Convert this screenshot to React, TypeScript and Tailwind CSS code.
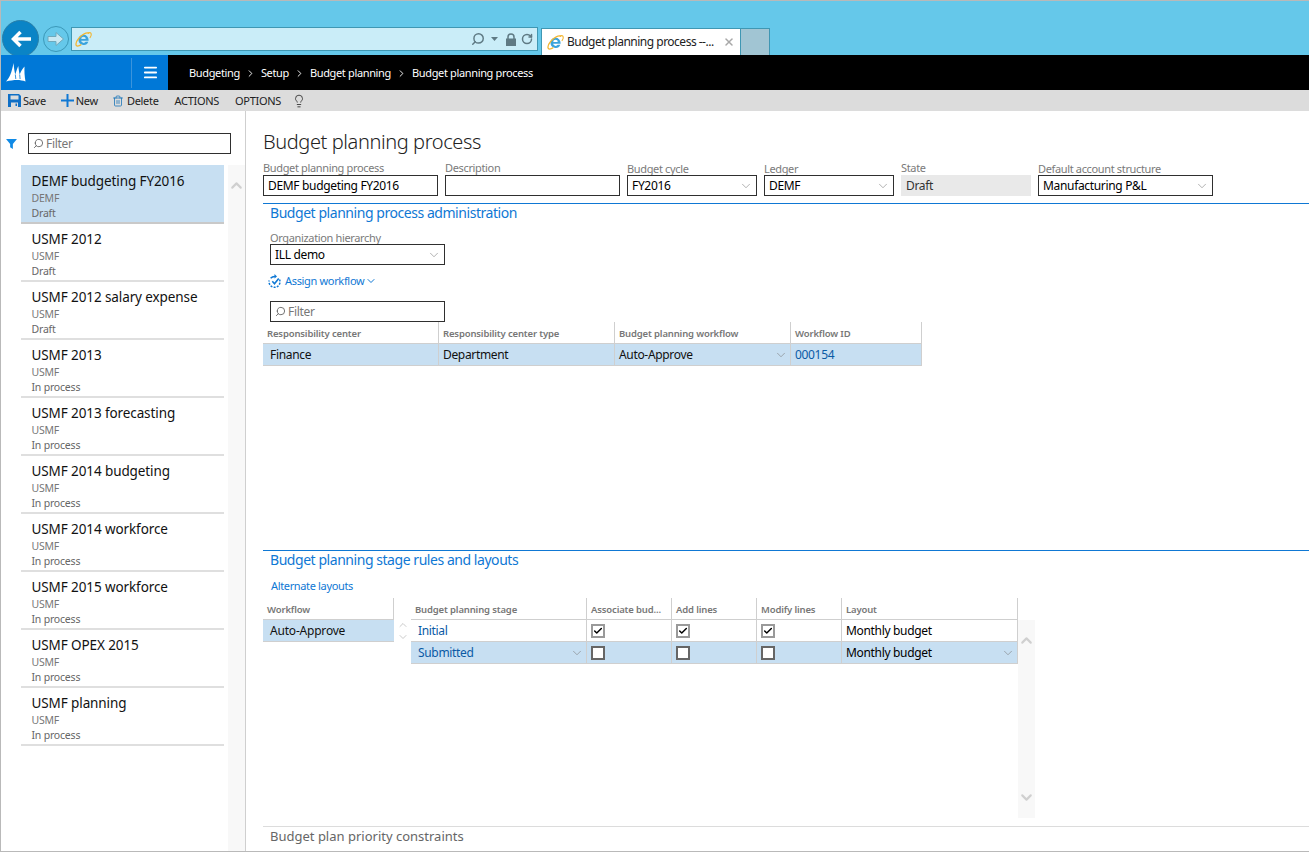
import { ChevronDown, ChevronUp, Lightbulb, Search, RotateCw, X, Trash2, Menu, ChevronRight, Check } from "lucide-react";

const processes = [
  { name: "DEMF budgeting FY2016", ledger: "DEMF", state: "Draft", selected: true },
  { name: "USMF 2012", ledger: "USMF", state: "Draft" },
  { name: "USMF 2012 salary expense", ledger: "USMF", state: "Draft" },
  { name: "USMF 2013", ledger: "USMF", state: "In process" },
  { name: "USMF 2013 forecasting", ledger: "USMF", state: "In process" },
  { name: "USMF 2014 budgeting", ledger: "USMF", state: "In process" },
  { name: "USMF 2014 workforce", ledger: "USMF", state: "In process" },
  { name: "USMF 2015 workforce", ledger: "USMF", state: "In process" },
  { name: "USMF OPEX 2015", ledger: "USMF", state: "In process" },
  { name: "USMF planning", ledger: "USMF", state: "In process" },
];

const IeLogo = ({ size }: { size: number }) => (
  <svg width={size} height={size} viewBox="0 0 20 20" className="shrink-0">
    <path d="M10 4.500a6 6 0 0 1 6 6v1H7.200a3 3 0 0 0 5.400 1.200h3.100A6 6 0 1 1 10 4.500Zm-2.700 5h5.400a2.700 2.700 0 0 0-5.400 0Z" fill="#3ba3dc" />
    <path d="M16.500 3C14 1 8 4 4.500 8.500 2 11.500 0.500 15 1.500 17c1 1.500 4 0.500 6-1" fill="none" stroke="#f2b632" strokeWidth="1.500" />
    <path d="M15 2.400c2.500-1 4.500-0.500 4 2.500-.2 1-.7 2-1.500 3.200" fill="none" stroke="#f2b632" strokeWidth="1.300" />
  </svg>
);

const Logo = () => (
  <svg width="20" height="19" viewBox="0 0 20 19">
    <path d="M0 18.500C3 16 6 9 7.500 0c.5 5 1 9 1.800 11.500C10.300 8 11.300 5 12.300 3c.5 4 .8 6.500 1.400 8.500C15 8 17 5 18.500 3.500c-.2 4.500 0 9.500 1 15-5-2-11.500-2-19.500 0Z" fill="#fff" />
    <path d="M9.300 11.500 9.800 16M13.700 11.500l.4 4.500" stroke="#0078d7" strokeWidth="0.800" fill="none" />
  </svg>
);

const AssignIcon = () => (
  <svg width="14" height="15" viewBox="0 0 14 15" fill="none" stroke="#0f78d4">
    <path d="M2.600 4.200A5.500 5.500 0 0 1 7 2.400" strokeWidth="1.500" />
    <path d="M6.500 0 9 2.400 6.500 4.600Z" fill="#0f78d4" stroke="none" />
    <path d="M11.500 5.500a5.500 5.500 0 1 1-10.300 1" strokeWidth="1.500" strokeDasharray="2 1.300" />
    <path d="M4.300 7.300 6.500 9.700 10.700 4.500" strokeWidth="1.600" />
  </svg>
);

const Caret = () => <ChevronDown size={14} strokeWidth={1} className="text-[#7a7a7a] shrink-0" />;

const Field = ({ label, value, width, select, readOnly, lift }: { label: string; value?: string; width: string; select?: boolean; readOnly?: boolean; lift?: boolean }) => (
  <div className={`flex flex-col ${width}`}>
    <span className={`text-[11px] leading-[13px] tracking-[-0.35px] text-[#7a7a7a] ${lift ? "-translate-y-px" : ""}`}>{label}</span>
    <div
      className={
        readOnly
          ? "h-[21px] flex items-center pl-[5px] bg-[#e9e9e9] text-[12px] tracking-[-0.33px] text-[#333]"
          : "h-[21px] flex items-center justify-between pl-[4px] pr-[3px] border border-[#2f2f2f] text-[12px] tracking-[-0.33px] text-black"
      }
    >
      <span>{value}</span>
      {select && <Caret />}
    </div>
  </div>
);

const FilterBox = ({ width }: { width: string }) => (
  <div className={`h-[21px] border border-[#2f2f2f] flex items-center gap-[2px] pl-[4px] ${width}`}>
    <Search size={11} strokeWidth={2} className="text-[#666] -scale-x-100" />
    <span className="text-[12px] tracking-[-0.3px] text-[#777]">Filter</span>
  </div>
);

const HeaderCell = ({ children, width }: { children: string; width: string }) => (
  <div className={`${width} h-[21px] flex items-center pl-[4px] pt-[3px] border-r border-[#cfcfcf] text-[9.500px] tracking-[-0.15px] font-semibold text-[#777]`}>{children}</div>
);

const CheckBox = ({ on }: { on?: boolean }) =>
  on ? (
    <div className="w-[14px] h-[14px] border-2 border-[#9a9a9a] bg-white flex items-center justify-center">
      <Check size={12} strokeWidth={3.500} className="text-black" />
    </div>
  ) : (
    <div className="w-[14px] h-[14px] border-2 border-[#666] bg-white" />
  );

const SectionHead = ({ children }: { children: string }) => (
  <div className="border-t border-[#0f78d4] pl-[7px] h-[20px] text-[14px] leading-[18px] tracking-[-0.45px] text-[#0f78d4]">{children}</div>
);

const StageRow = ({ stage, selected, checked }: { stage: string; selected?: boolean; checked?: boolean }) => (
  <div className={`flex h-[22px] border-b border-[#cfcfcf] text-[12px] tracking-[-0.33px] ${selected ? "bg-[#c7dff2]" : ""}`}>
    <div className="w-[176px] flex items-center justify-between pl-[7px] pr-[2px] border-r border-[#cfcfcf] text-[#0a5aa5]">
      <span>{stage}</span>
      {selected && <Caret />}
    </div>
    <div className="w-[85px] flex items-center pl-[4px] border-r border-[#cfcfcf]"><CheckBox on={checked} /></div>
    <div className="w-[85px] flex items-center pl-[4px] border-r border-[#cfcfcf]"><CheckBox on={checked} /></div>
    <div className="w-[85px] flex items-center pl-[4px] border-r border-[#cfcfcf]"><CheckBox on={checked} /></div>
    <div className="w-[176px] flex items-center justify-between pl-[4px] pr-[2px] border-r border-[#cfcfcf] text-black">
      <span>Monthly budget</span>
      {selected && <Caret />}
    </div>
  </div>
);

export default function App() {
  return (
    <div className="w-[1309px] h-[852px] overflow-hidden flex flex-col bg-white font-['Noto_Sans','Open_Sans',sans-serif] border-l border-t border-b border-[#b9b9b9]">
      {/* browser chrome */}
      <div className="h-[54px] shrink-0 bg-[#65c8ea] flex items-end pl-[1px]">
        <div className="w-[37px] h-[35px] overflow-hidden">
          <div className="w-[37px] h-[37px] rounded-full bg-[#0a84c6] border border-[#2a7fa8] flex items-center justify-center">
            <svg width="21" height="18" viewBox="0 0 21 18" fill="none" stroke="#fff" strokeWidth="3.500"><path d="M21 9H3M10.500 2 3.500 9l7 7" /></svg>
          </div>
        </div>
        <div className="ml-[4px] mb-[3px] w-[26px] h-[26px] rounded-full border border-[#3b98b8] flex items-center justify-center">
          <svg width="18" height="16" viewBox="0 0 18 16"><path d="M1 5.500h8V1.500L16.500 8 9 14.500v-4H1Z" fill="#c9e9f3" stroke="#6fa9bc" /></svg>
        </div>
        <div className="ml-[2px] mb-[4px] w-[467px] h-[24px] bg-[#caedf8] border border-[#3f97b3] flex items-center pl-[3px] pr-[4px]">
          <IeLogo size={17} />
          <div className="ml-auto flex items-center text-[#5f7a84]">
            <Search size={14} strokeWidth={2.500} className="-scale-x-100" />
            <svg width="9" height="5" viewBox="0 0 9 5" className="ml-[5px] mr-[6px]"><path d="M1 0h7L4.500 4Z" fill="#5f7a84" /></svg>
            <svg width="12" height="13" viewBox="0 0 12 13" fill="#5f7a84"><path d="M1 5.500h10V13H1Z" /><path d="M3 6V4a3 3 0 0 1 6 0v2" fill="none" stroke="#5f7a84" strokeWidth="1.500" /></svg>
            <RotateCw size={12} strokeWidth={3} className="ml-[4px]" />
          </div>
        </div>
        <div className="ml-[3px] w-[200px] h-[27px] bg-white border border-[#3f97b3] border-b-0 flex items-center pl-[5px] gap-[3px] pr-[5px]">
          <IeLogo size={17} />
          <span className="text-[12px] tracking-[-0.5px] text-[#222] whitespace-nowrap">Budget planning process --...</span>
          <X size={12} strokeWidth={3} className="text-[#a8a8a8] ml-auto" />
        </div>
        <div className="w-[29px] h-[27px] bg-[#a1c5d3] border border-[#3f97b3] border-b-0 border-l-0" />
      </div>

      {/* nav bar */}
      <div className="h-[35px] shrink-0 bg-black flex items-center">
        <div className="w-[167px] h-full bg-[#0078d7] flex items-center">
          <div className="w-[131px] h-[30px] border-r border-[#3b94dc] pl-[5px] flex items-center"><Logo /></div>
          <div className="flex-1 flex justify-center"><Menu size={17} strokeWidth={2.500} className="text-white" /></div>
        </div>
        <div className="ml-[21px] pt-[2px] flex items-center text-[11px] tracking-[-0.35px] text-white">
          <span>Budgeting</span>
          <ChevronRight size={11} className="mx-[5px]" />
          <span>Setup</span>
          <ChevronRight size={11} className="mx-[5px]" />
          <span>Budget planning</span>
          <ChevronRight size={11} className="mx-[5px]" />
          <span>Budget planning process</span>
        </div>
      </div>

      {/* action pane */}
      <div className="h-[21px] shrink-0 bg-[#dcdcdc] flex items-center pl-[7px] text-[11px] tracking-[-0.3px] text-[#222]">
        <svg width="13" height="13" viewBox="0 0 13 13" className="mr-[2px]"><path d="M0 0h11l2 2v11H0Z" fill="#0f6fc6" /><path d="M2.500 1.500h8v4h-8ZM3 8.500h7V13H3Z" fill="#dcdcdc" /><path d="M7.500 9.500h1.500V12H7.500Z" fill="#0f6fc6" /></svg>
        <span className="pt-[2px]">Save</span>
        <svg width="13" height="13" viewBox="0 0 13 13" className="ml-[15px]" fill="#0f78d4"><path d="M5.500 0h2v5.500H13v2H7.500V13h-2V7.500H0v-2h5.500Z" /></svg>
        <span className="ml-[2px] pt-[2px]">New</span>
        <Trash2 size={12} strokeWidth={1.500} className="ml-[14px] mr-[3px] text-[#0f6fb5]" />
        <span className="pt-[2px]">Delete</span>
        <span className="ml-[16px] pt-[2px]">ACTIONS</span>
        <span className="ml-[16px] pt-[2px]">OPTIONS</span>
        <Lightbulb size={14} strokeWidth={1.500} className="ml-[11px] text-[#333]" />
      </div>

      <div className="flex flex-1 min-h-0">
        {/* list pane */}
        <aside className="w-[245px] shrink-0 border-r border-[#cfcfcf] flex flex-col">
          <div className="flex items-center h-[54px] pl-[5px] pt-[22px] pb-[11px]">
            <svg width="11" height="10" viewBox="0 0 12 11"><path d="M0 0h12L7.500 5.500V11l-3-2V5.500Z" fill="#0f8ae6" /></svg>
            <FilterBox width="w-[203px] ml-[11px]" />
          </div>
          <div className="flex flex-1 min-h-0">
            <div className="w-[203px] ml-[20px]">
              {processes.map((p) => (
                <div key={p.name} className={`border-b-2 pl-[10.500px] ${p.selected ? "h-[59px] pt-[6px] bg-[#c7dff2] border-[#c9c9c9]" : "h-[58px] pt-[5px] border-[#dfdfdf]"}`}>
                  <div className="text-[13.500px] leading-[20px] tracking-[-0.1px] text-[#111] whitespace-nowrap">{p.name}</div>
                  <div className="text-[10.500px] leading-[15px] tracking-[-0.2px] text-[#777]">{p.ledger}</div>
                  <div className="text-[10.500px] leading-[15px] tracking-[-0.2px] text-[#666]">{p.state}</div>
                </div>
              ))}
            </div>
            <div className="w-[17px] ml-[4px] bg-[#f8f8f8] pt-[12px] flex justify-center">
              <ChevronUp size={17} strokeWidth={3} className="text-[#d0d0d0]" />
            </div>
          </div>
        </aside>

        {/* content */}
        <main className="flex-1 min-w-0 pl-[17px] flex flex-col">
          <h1 className="mt-[17px] h-[30px] text-[20px] leading-[28px] tracking-[-0.4px] font-light text-[#222]">Budget planning process</h1>
          <div className="mt-[4px] flex gap-[7px]">
            <Field label="Budget planning process" value="DEMF budgeting FY2016" width="w-[175px]" lift />
            <Field label="Description" width="w-[175px]" lift />
            <Field label="Budget cycle" value="FY2016" width="w-[130px]" select />
            <Field label="Ledger" value="DEMF" width="w-[130px]" select />
            <Field label="State" value="Draft" width="w-[130px]" readOnly lift />
            <Field label="Default account structure" value="Manufacturing P&L" width="w-[175px]" select />
          </div>

          <div className="mt-[7px] h-[347px] shrink-0">
            <SectionHead>Budget planning process administration</SectionHead>
            <div className="pl-[7px] mt-[8px]">
              <Field label="Organization hierarchy" value="ILL demo" width="w-[175px]" select />
              <div className="mt-[7px] h-[18px] flex items-center text-[11px] tracking-[-0.33px] text-[#0f78d4]">
                <span className="-ml-[2px]"><AssignIcon /></span>
                <span className="ml-[3px]">Assign workflow</span>
                <ChevronDown size={12} strokeWidth={2} className="ml-[1px]" />
              </div>
              <FilterBox width="w-[175px] mt-[11px]" />
            </div>
            <div className="flex w-[659px]">
              <HeaderCell width="w-[176px]">Responsibility center</HeaderCell>
              <HeaderCell width="w-[176px]">Responsibility center type</HeaderCell>
              <HeaderCell width="w-[176px]">Budget planning workflow</HeaderCell>
              <HeaderCell width="w-[131px]">Workflow ID</HeaderCell>
            </div>
            <div className="flex w-[659px] h-[23px] bg-[#c7dff2] border-y border-[#cfcfcf] text-[12px] tracking-[-0.33px] text-[#111]">
              <div className="w-[176px] flex items-center pl-[7px] border-r border-[#cfcfcf]">Finance</div>
              <div className="w-[176px] flex items-center pl-[4px] border-r border-[#cfcfcf]">Department</div>
              <div className="w-[176px] flex items-center justify-between pl-[4px] pr-[2px] border-r border-[#cfcfcf]">
                <span>Auto-Approve</span>
                <Caret />
              </div>
              <div className="w-[131px] flex items-center pl-[4px] border-r border-[#cfcfcf] text-[#0a5aa5]">000154</div>
            </div>
          </div>

          <div className="h-[277px] shrink-0 border-b border-[#dcdcdc]">
            <SectionHead>Budget planning stage rules and layouts</SectionHead>
            <div className="pl-[8px] mt-[7px] h-[18px] text-[11px] leading-[18px] tracking-[-0.35px] text-[#0f78d4]">Alternate layouts</div>
            <div className="mt-[3px] flex">
              <div className="w-[131px]">
                <HeaderCell width="w-[131px]">Workflow</HeaderCell>
                <div className="h-[23px] bg-[#c7dff2] border-y border-[#cfcfcf] pl-[7px] flex items-center text-[12px] tracking-[-0.2px] text-[#111]">Auto-Approve</div>
              </div>
              <div className="w-[17px] pt-[21px] flex flex-col items-center text-[#b8b8b8]">
                <ChevronUp size={12} strokeWidth={1.500} />
                <ChevronDown size={12} strokeWidth={1.500} />
              </div>
              <div className="w-[607px]">
                <div className="flex border-b border-[#cfcfcf]">
                  <HeaderCell width="w-[176px]">Budget planning stage</HeaderCell>
                  <HeaderCell width="w-[85px]">Associate bud...</HeaderCell>
                  <HeaderCell width="w-[85px]">Add lines</HeaderCell>
                  <HeaderCell width="w-[85px]">Modify lines</HeaderCell>
                  <HeaderCell width="w-[176px]">Layout</HeaderCell>
                </div>
                <StageRow stage="Initial" checked />
                <StageRow stage="Submitted" selected />
              </div>
              <div className="w-[17px] h-[198px] mt-[22px] bg-[#f8f8f8] flex flex-col items-center justify-between pt-[12px] pb-[12px]">
                <ChevronUp size={17} strokeWidth={3} className="text-[#d0d0d0]" />
                <ChevronDown size={17} strokeWidth={3} className="text-[#d0d0d0]" />
              </div>
            </div>
          </div>

          <div className="pl-[7px] text-[13px] leading-[19px] text-[#666]">Budget plan priority constraints</div>
        </main>
      </div>
    </div>
  );
}
